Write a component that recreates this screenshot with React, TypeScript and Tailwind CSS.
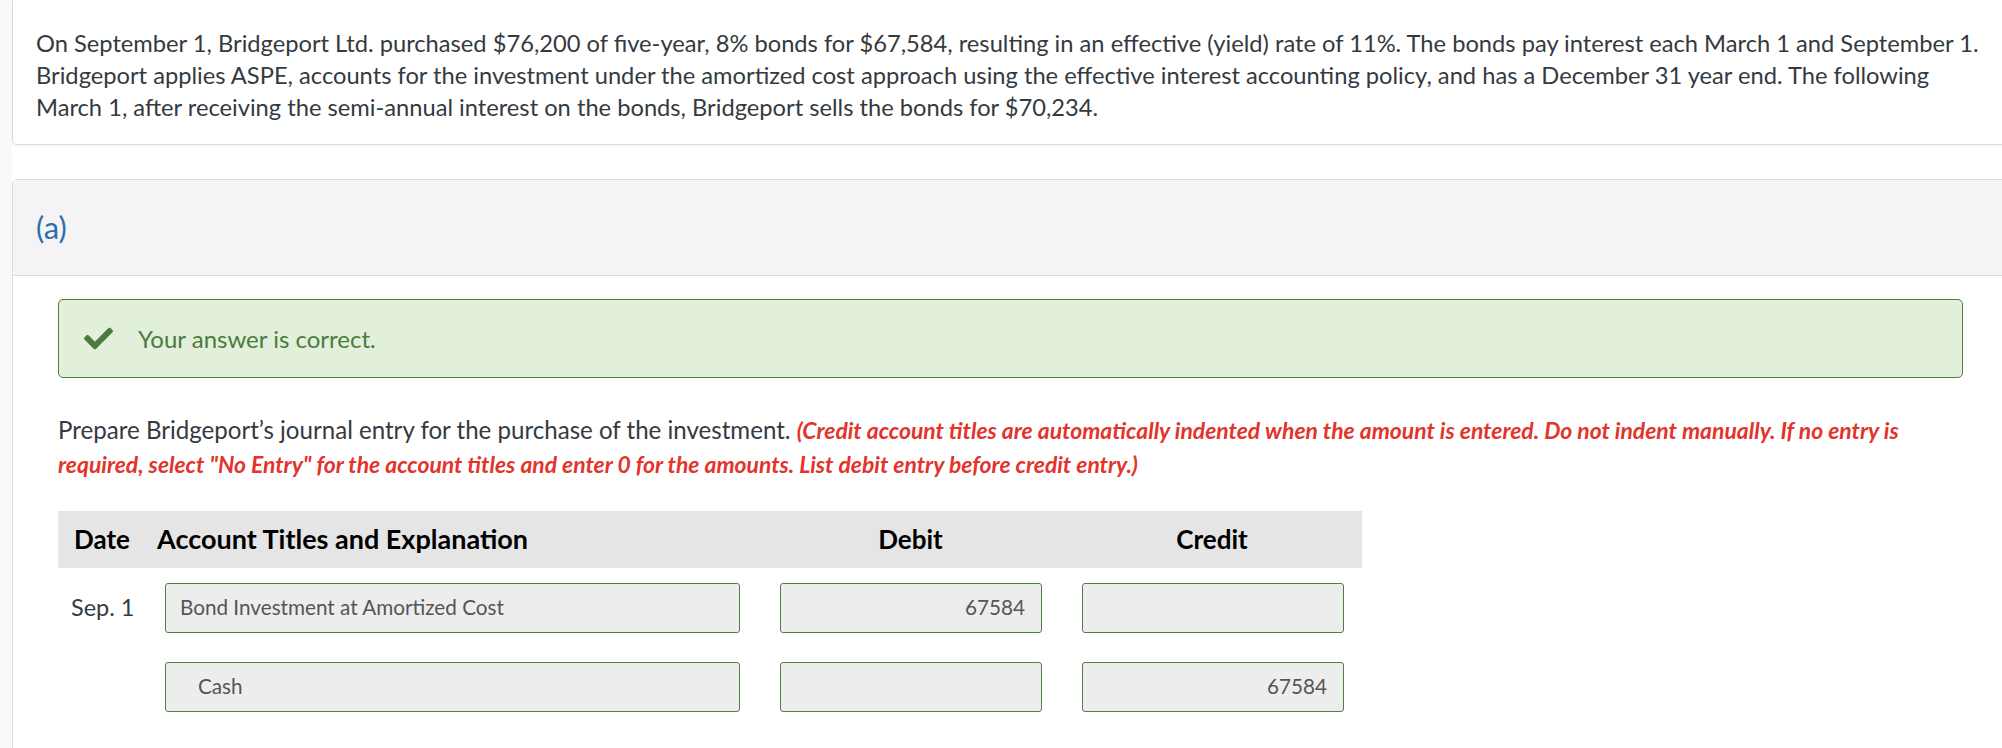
import { FaCheck } from "react-icons/fa";

const rows = [
  { date: "Sep. 1", account: "Bond Investment at Amortized Cost", debit: "67584", credit: "", indent: false },
  { date: "", account: "Cash", debit: "", credit: "67584", indent: true },
];

function Field({ value, align = "left", indent = false, width }: { value: string; align?: "left" | "right"; indent?: boolean; width: string }) {
  return (
    <div
      className={`${width} h-[50px] shrink-0 flex items-center rounded-[3px] border border-[#4f7f42] bg-[#ededed] text-[20.7px] text-[#555] ${
        align === "right" ? "justify-end pr-4" : indent ? "pl-[32px]" : "pl-[14px]"
      }`}
    >
      {value}
    </div>
  );
}

export default function App() {
  return (
    <div className="flex min-h-screen bg-white font-['Lato',sans-serif] text-[#343a40]">
      <div className="w-3 shrink-0 bg-[#f9f9f9]" />
      <div className="flex-1 min-w-0">
        {/* Question text */}
        <div className="rounded-bl-[5px] border-b border-l border-[#dcdcdc] pl-[23px] pt-[27px] pb-[21px] shadow-[0_1px_2px_rgba(0,0,0,0.06)]">
          <p className="w-[1952px] text-[23.7px] leading-[32px]">
            On September 1, Bridgeport Ltd. purchased $76,200 of five-year, 8% bonds for $67,584, resulting in an effective (yield) rate of 11%. The
            bonds pay interest each March 1 and September 1. Bridgeport applies ASPE, accounts for the investment under the amortized cost approach
            using the effective interest accounting policy, and has a December 31 year end. The following March 1, after receiving the semi-annual
            interest on the bonds, Bridgeport sells the bonds for $70,234.
          </p>
        </div>

        {/* Part (a) */}
        <div className="mt-[34px] rounded-tl-[5px] border-t border-l border-[#dcdcdc]">
          <div className="flex h-[96px] items-center border-b border-[#dcdcdc] bg-[#f4f4f4] pl-[23px]">
            <span className="text-[31px] text-[#2f6fae]">(a)</span>
          </div>

          <div className="pl-[45px] pt-[23px] pb-10">
            <div className="flex h-[79px] w-[1905px] items-center rounded-[5px] border border-[#4f7f42] bg-[#e2efda] pl-[25px]">
              <FaCheck className="h-[29px] w-[29px] text-[#4b7b3e]" />
              <span className="ml-[25px] text-[24px] text-[#4b7b3e]">Your answer is correct.</span>
            </div>

            <p className="mt-[35px] w-[1906px] text-[24.1px] leading-[33px]">
              Prepare Bridgeport’s journal entry for the purchase of the investment.{" "}
              <span className="text-[22.9px] font-bold italic text-[#e3342b]">
                (Credit account titles are automatically indented when the amount is entered. Do not indent manually. If no entry is required, select
                "No Entry" for the account titles and enter 0 for the amounts. List debit entry before credit entry.)
              </span>
            </p>

            {/* Journal table */}
            <div className="mt-[30px] w-[1304px]">
              <div className="flex h-[57px] items-center bg-[#e5e5e5] text-[26px] font-bold text-black">
                <div className="w-[99px] shrink-0 pl-4">Date</div>
                <div className="w-[623px] shrink-0 text-[27px]">Account Titles and Explanation</div>
                <div className="w-[261px] shrink-0 text-center">Debit</div>
                <div className="w-[40px] shrink-0" />
                <div className="w-[262px] shrink-0 text-center">Credit</div>
              </div>

              <div className="mt-[15px] flex flex-col gap-[29px]">
                {rows.map((r, i) => (
                  <div key={i} className="flex items-center">
                    <div className="w-[107px] shrink-0 pl-[13px] text-[23.5px]">{r.date}</div>
                    <Field width="w-[575px]" value={r.account} indent={r.indent} />
                    <div className="w-10 shrink-0" />
                    <Field width="w-[262px]" value={r.debit} align="right" />
                    <div className="w-10 shrink-0" />
                    <Field width="w-[262px]" value={r.credit} align="right" />
                  </div>
                ))}
              </div>
            </div>
          </div>
        </div>
      </div>
    </div>
  );
}
